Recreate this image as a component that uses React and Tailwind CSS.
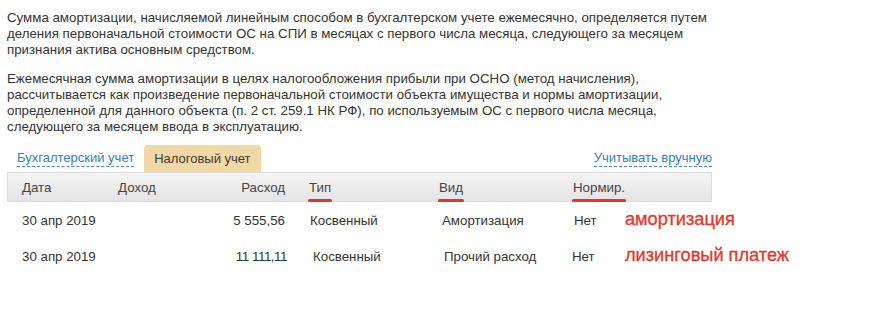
import React from 'react'

const rows = [
  {
    date: '30 апр 2019',
    sum: '5 555,56',
    sumCls: 'w-[78px]',
    type: 'Косвенный',
    typeCls: 'w-[153px] pl-[25px]',
    kind: 'Амортизация',
    kindCls: 'pl-[4px]',
    norm: 'Нет',
    normCls: 'pl-[2px]',
    note: 'амортизация',
    h: 'h-[37px]',
  },
  {
    date: '30 апр 2019',
    sum: '11 111,11',
    sumCls: 'w-[80px] tracking-[-0.45px]',
    type: 'Косвенный',
    typeCls: 'w-[151px] pl-[26px]',
    kind: 'Прочий расход',
    kindCls: 'pl-[6px]',
    norm: 'Нет',
    normCls: 'pl-0',
    note: 'лизинговый платеж',
    h: 'h-[36px]',
  },
]

function Marked({ children }) {
  return (
    <span className="relative inline-block">
      {children}
      <span className="absolute -bottom-[6px] -left-[1px] -right-[1px] h-[3px] rounded-full bg-[#e0352b]" />
    </span>
  )
}

export default function App() {
  return (
    <div className="min-h-[318px] w-[895px] bg-white pl-[7px] pt-[10px] font-['Liberation_Sans',Arial,sans-serif] text-[13.3px] leading-[16.2px] text-[#333]">
      <p>
        Сумма амортизации, начисляемой линейным способом в бухгалтерском учете ежемесячно, определяется путем
        <br />
        деления первоначальной стоимости ОС на СПИ в месяцах с первого числа месяца, следующего за месяцем
        <br />
        признания актива основным средством.
      </p>
      <p className="mt-[12px]">
        Ежемесячная сумма амортизации в целях налогообложения прибыли при ОСНО (метод начисления),
        <br />
        рассчитывается как произведение первоначальной стоимости объекта имущества и нормы амортизации,
        <br />
        определенной для данного объекта (п. 2 ст. 259.1 НК РФ), по используемым ОС с первого числа месяца,
        <br />
        следующего за месяцем ввода в эксплуатацию.
      </p>

      <div className="mt-[10px] flex w-[705px] items-end text-[13px]">
        <a className="mb-[5px] ml-[10px] border-b border-dashed border-[#3b8dd3] text-[#2f80c8]">
          Бухгалтерский учет
        </a>
        <div className="ml-[10px] flex h-[27px] items-center rounded-t-[4px] bg-[#f2d8a5] px-[10px] text-[#3a3a3a]">
          Налоговый учет
        </div>
        <a className="mb-[5px] ml-auto border-b border-dashed border-[#3b8dd3] text-[#2f80c8]">
          Учитывать вручную
        </a>
      </div>

      <div className="flex h-[30px] w-[705px] items-center border border-[#dcdcdc] bg-gradient-to-b from-[#f4f4f4] to-[#e4e4e4] pt-[1px] text-[#444]">
        <div className="w-[110px] pl-[14px]">Дата</div>
        <div className="w-[90px]">Доход</div>
        <div className="w-[77px] text-right">Расход</div>
        <div className="w-[154px] pl-[24px]">
          <Marked>Тип</Marked>
        </div>
        <div className="w-[134px]">
          <Marked>Вид</Marked>
        </div>
        <div>
          <Marked>Нормир.</Marked>
        </div>
      </div>

      {rows.map((r, i) => (
        <div key={i} className={`flex items-center ${r.h} text-[#333]`}>
          <div className="w-[110px] pl-[15px]">{r.date}</div>
          <div className="w-[90px]" />
          <div className={`text-right ${r.sumCls}`}>{r.sum}</div>
          <div className={r.typeCls}>{r.type}</div>
          <div className={`w-[134px] ${r.kindCls}`}>{r.kind}</div>
          <div className={`w-[53px] ${r.normCls}`}>{r.norm}</div>
          <div className="-mt-[4px] text-[18.2px] leading-[20px] text-[#e5392e] [-webkit-text-stroke:0.35px_#e5392e]">
            {r.note}
          </div>
        </div>
      ))}
    </div>
  )
}
